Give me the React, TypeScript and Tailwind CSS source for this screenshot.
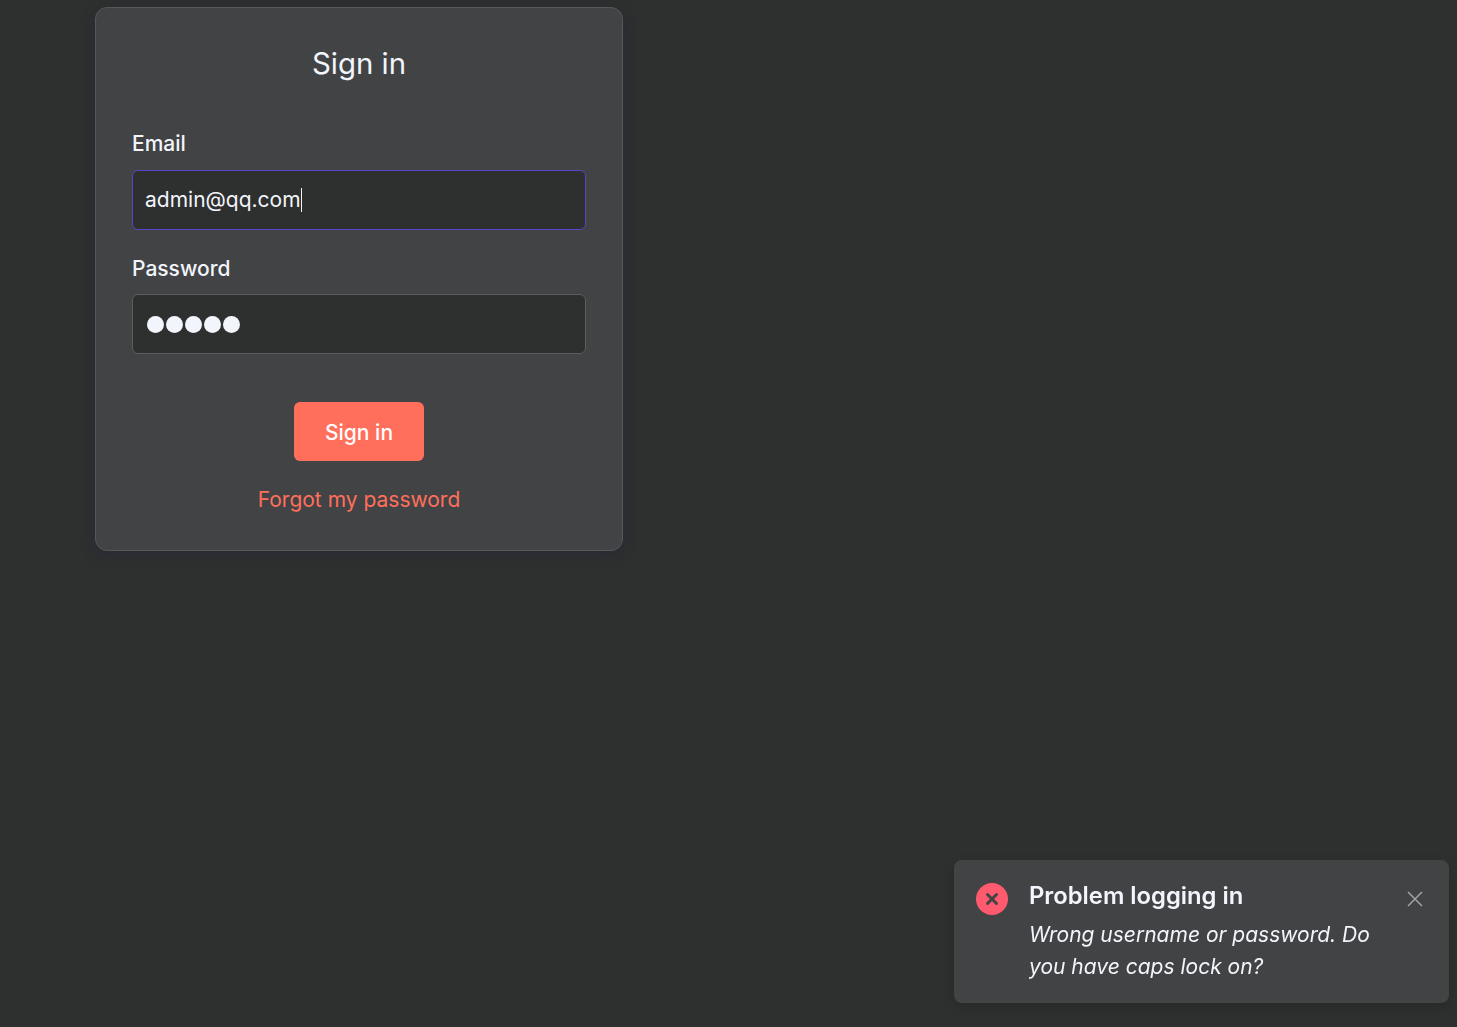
import React from 'react';

const font = "font-['Inter',sans-serif]";

export default function App() {
  return (
    <div className={`min-h-[1027px] bg-[#2e2f2f] pl-[95px] pt-[7px] ${font} text-[#f2f5fb]`}>
      <form className="flex h-[544px] w-[528px] flex-col rounded-xl border border-[#565759] bg-[#424345] px-9 pt-[37px] shadow-[0_4px_12px_rgba(40,40,60,0.5)]">
        <h1 className="text-center text-[29.4px] leading-[38px] font-normal">Sign in</h1>

        <label className="mt-[47px] text-[21px] leading-[28px] font-medium">Email</label>
        <div className="mt-[12px] flex h-[60px] items-center rounded-md border border-[#5a43c8] bg-[#2e2f2f] px-3 text-[21px]">
          <span>admin@qq.com</span>
          <span className="h-[24px] w-px bg-[#f2f5fb]" />
        </div>

        <label className="mt-[25px] text-[21px] leading-[28px] font-medium">Password</label>
        <div className="mt-[11px] flex h-[60px] items-center gap-[2.2px] rounded-md border border-[#5c5d5f] bg-[#2e2f2f] px-[13.5px]">
          <span className="size-[17px] rounded-full bg-[#f2f5fb]" />
          <span className="size-[17px] rounded-full bg-[#f2f5fb]" />
          <span className="size-[17px] rounded-full bg-[#f2f5fb]" />
          <span className="size-[17px] rounded-full bg-[#f2f5fb]" />
          <span className="size-[17px] rounded-full bg-[#f2f5fb]" />
        </div>

        <button type="button" className="mx-auto mt-[48px] h-[59px] w-[130px] rounded-md bg-[#ff6f5c] pt-[2px] text-[21px] font-medium text-white">
          Sign in
        </button>

        <a className="mt-[24px] text-center text-[21px] leading-[30px] text-[#ff6f5c]">Forgot my password</a>
      </form>

      <div className="fixed top-[860px] left-[954px] flex h-[143px] w-[495px] rounded-lg bg-[#424345] pt-[20px] pl-[22px] shadow-[0_4px_12px_rgba(0,0,0,0.15)]">
        <svg width="32" height="32" viewBox="0 0 32 32" className="mt-[3px] shrink-0">
          <circle cx="16" cy="16" r="16" fill="#ff5a6e" />
          <path d="M11.5 11.5l9 9M20.5 11.5l-9 9" stroke="#424345" strokeWidth="3" strokeLinecap="round" />
        </svg>
        <div className="ml-[21px] w-[350px]">
          <div className="text-[23.8px] leading-[32px] font-semibold">Problem logging in</div>
          <div className="mt-[7px] text-[21px] leading-[32px] italic">Wrong username or password. Do you have caps lock on?</div>
        </div>
        <svg width="16" height="16" viewBox="0 0 16 16" className="mt-[11px] ml-[28px] shrink-0">
          <path d="M1 1l14 14M15 1L1 15" stroke="#a0a2a6" strokeWidth="1.5" />
        </svg>
      </div>
    </div>
  );
}
